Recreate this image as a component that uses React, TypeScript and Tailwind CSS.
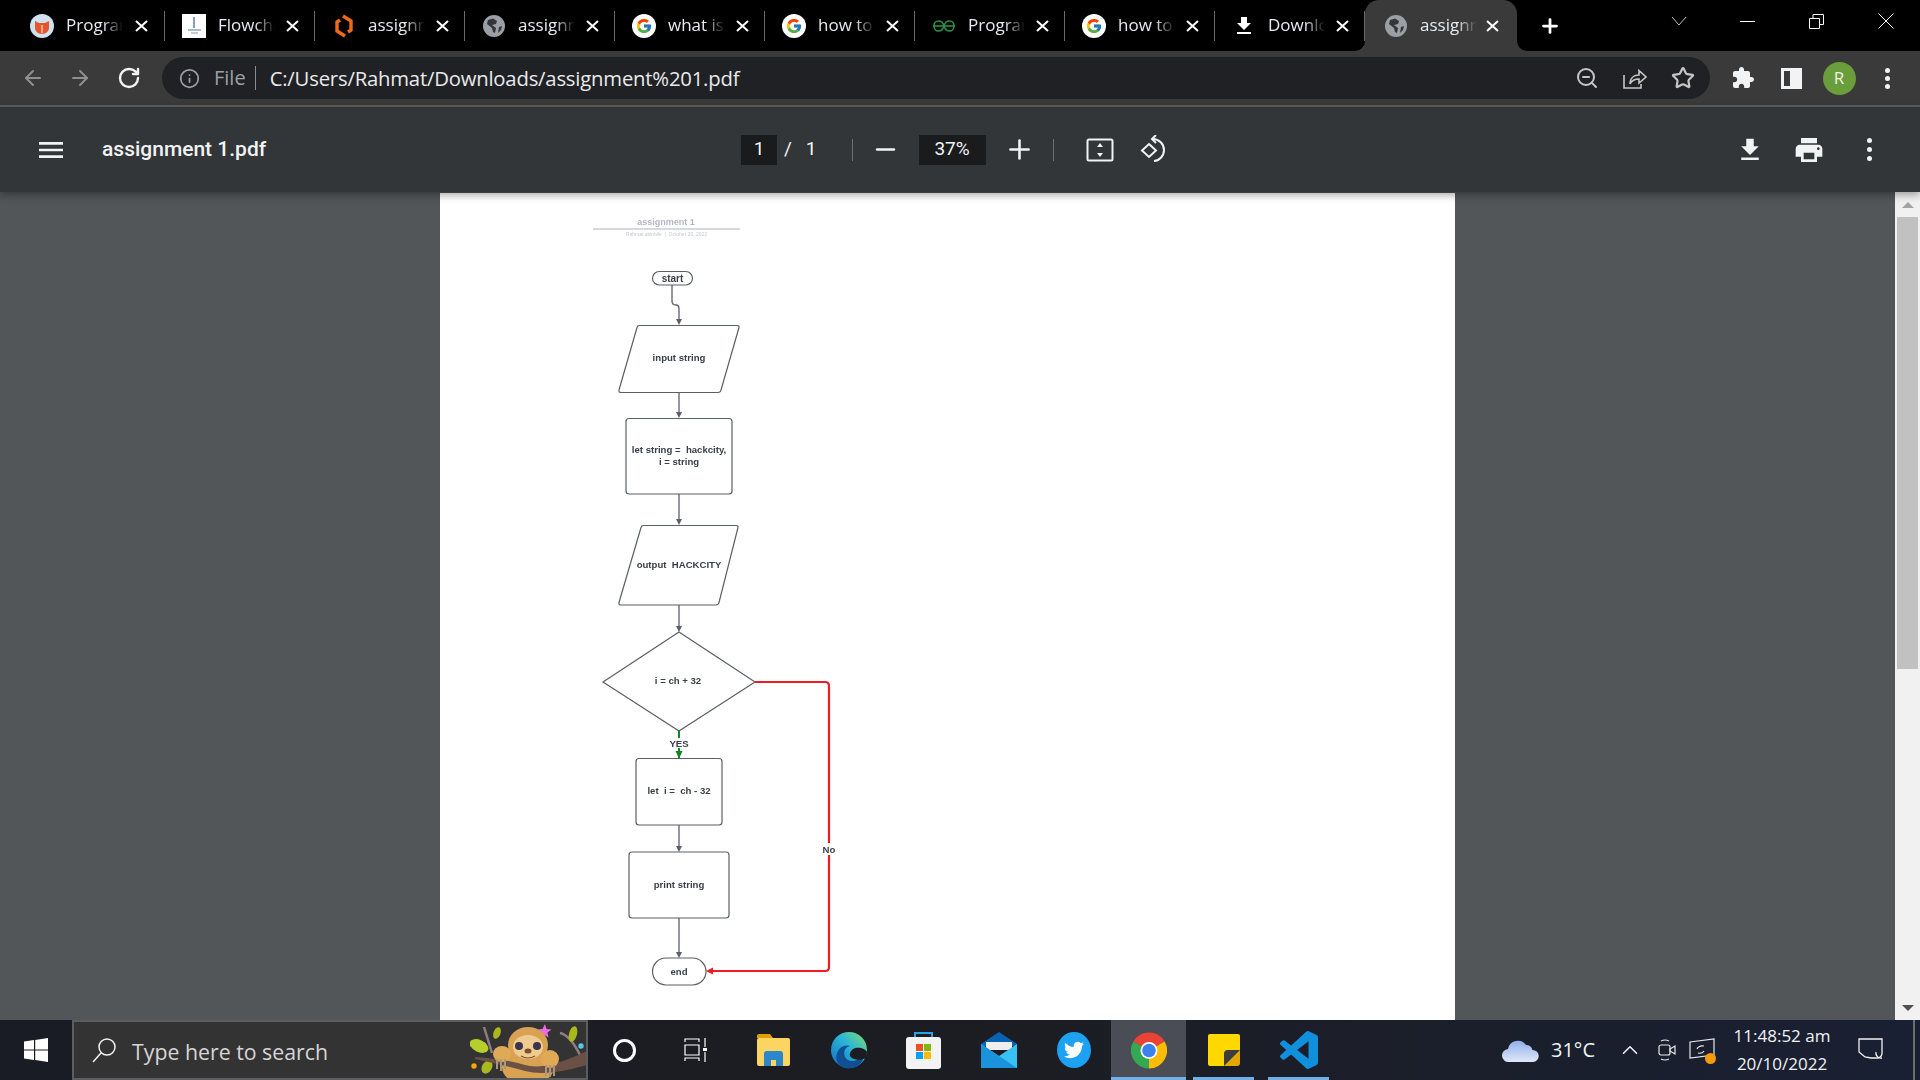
import { ArrowLeft, ArrowRight, RotateCw, Info, ZoomOut, Star, Plus, Minus, ChevronDown } from "lucide-react";
import type { ReactNode } from "react";

const ui = "font-['Open_Sans',sans-serif]";

function GoogleIcon() {
  return (
    <svg width="24" height="24" viewBox="0 0 48 48">
      <circle cx="24" cy="24" r="24" fill="#fff" />
      <g transform="translate(7 7) scale(0.71)">
        <path fill="#FFC107" d="M43.6 20.1H42V20H24v8h11.3C33.7 32.7 29.2 36 24 36c-6.6 0-12-5.4-12-12s5.4-12 12-12c3.1 0 5.8 1.2 8 3l5.7-5.7C34 6.1 29.3 4 24 4 13 4 4 13 4 24s9 20 20 20 20-9 20-20c0-1.3-.1-2.7-.4-3.9z" />
        <path fill="#FF3D00" d="M6.3 14.7l6.6 4.8C14.7 15.1 19 12 24 12c3.1 0 5.8 1.2 8 3l5.7-5.7C34 6.1 29.3 4 24 4 16.3 4 9.7 8.3 6.3 14.7z" />
        <path fill="#4CAF50" d="M24 44c5.2 0 9.9-2 13.4-5.2l-6.2-5.2C29.2 35.1 26.7 36 24 36c-5.2 0-9.6-3.3-11.3-7.9l-6.5 5C9.5 39.6 16.2 44 24 44z" />
        <path fill="#1976D2" d="M43.6 20.1H42V20H24v8h11.3c-.8 2.2-2.2 4.2-4.1 5.6l6.2 5.2C37 39.2 44 34 44 24c0-1.3-.1-2.7-.4-3.9z" />
      </g>
    </svg>
  );
}

function GlobeIcon() {
  return (
    <svg width="24" height="24" viewBox="0 0 24 24">
      <circle cx="12" cy="12" r="11" fill="#9aa0a6" />
      <path fill="#35363a" d="M11 4.5 6 6l-1 4 5 4 1 4 2 1 1-5-4-3 4-1 1-3zM17 13l3-1-1 4-3 3z" />
    </svg>
  );
}

function ProgramizIcon() {
  return (
    <svg width="24" height="24" viewBox="0 0 24 24">
      <circle cx="12" cy="12" r="12" fill="#cfe2ee" />
      <path fill="#e4572e" d="M5 7l4 2h6l4-2v7c0 3-3 6-7 6s-7-3-7-6z" />
      <path fill="#f7a58c" d="M11 11h2v8h-2z" />
    </svg>
  );
}

function FlowchartFavicon() {
  return (
    <div className="w-[24px] h-[24px] bg-white flex flex-col items-center justify-center gap-[1px]">
      <div className="w-[2px] h-[11px] bg-[#8aa0b8]" />
      <div className="w-[13px] h-[2px] bg-[#a9bccf]" />
      <div className="w-[7px] h-[2px] bg-[#c0ccd8]" />
    </div>
  );
}

function LucidIcon() {
  return (
    <svg width="24" height="24" viewBox="0 0 24 24" fill="none" stroke="#f26a16" strokeWidth="3.4">
      <path d="M11 2l8 5v9l-3 2" />
      <path d="M13 22l-8-5V8l3-2" />
    </svg>
  );
}

function GfgIcon() {
  return (
    <svg width="24" height="24" viewBox="0 0 24 24" fill="none" stroke="#2f8d46" strokeWidth="1.6">
      <path d="M1 12h22" />
      <path d="M12 12c-1-4-3-5-5.500-5S2 9 2 12s2 5 4.500 5 4.500-1.500 5.500-5" />
      <path d="M12 12c1-4 3-5 5.500-5S22 9 22 12s-2 5-4.500 5-4.500-1.500-5.500-5" />
    </svg>
  );
}

function DownloadGlyph({ size = 24, className = "" }: { size?: number; className?: string }) {
  return (
    <svg width={size} height={size} viewBox="0 0 24 24" fill="currentColor" className={className}>
      <path d="M19 9h-4V3H9v6H5l7 7 7-7zM5 18v2h14v-2H5z" />
    </svg>
  );
}

function Dots({ gap = "gap-[3px]" }: { gap?: string }) {
  return (
    <div className={`flex flex-col items-center ${gap}`}>
      <div className="w-[5px] h-[5px] rounded-full bg-[#f1f3f4]" />
      <div className="w-[5px] h-[5px] rounded-full bg-[#f1f3f4]" />
      <div className="w-[5px] h-[5px] rounded-full bg-[#f1f3f4]" />
    </div>
  );
}

function CloseGlyph() {
  return (
    <svg width="13" height="12" viewBox="0 0 13 12" stroke="#fff" strokeWidth="2" className="shrink-0">
      <path d="M1 1l11 10M12 1L1 11" />
    </svg>
  );
}

const tabs: { icon: ReactNode; title: string }[] = [
  { icon: <ProgramizIcon />, title: "Program" },
  { icon: <FlowchartFavicon />, title: "Flowchart" },
  { icon: <LucidIcon />, title: "assignment" },
  { icon: <GlobeIcon />, title: "assignment" },
  { icon: <GoogleIcon />, title: "what is a" },
  { icon: <GoogleIcon />, title: "how to co" },
  { icon: <GfgIcon />, title: "Program" },
  { icon: <GoogleIcon />, title: "how to co" },
  { icon: <DownloadGlyph className="text-white" />, title: "Downloads" },
];

function Tab({ icon, title, active, first }: { icon: ReactNode; title: string; active?: boolean; first?: boolean }) {
  return (
    <div
      className={`relative flex items-center h-[51px] shrink-0 ${
        active ? "w-[152px] pl-[19px] bg-[#3a3a3a] rounded-t-[14px]" : first ? "w-[150px] pl-[15px]" : "w-[150px] pl-[17px]"
      }`}
    >
      {icon}
      <span className="ml-[12px] -mt-[2px] w-[57px] whitespace-nowrap overflow-hidden text-[17px] text-[#e8eaed] [mask-image:linear-gradient(to_right,black_65%,transparent)]">
        {title}
      </span>
      <span className={active ? "ml-[9px]" : first ? "ml-[12px]" : "ml-[11px]"}>
        <CloseGlyph />
      </span>
      {!active && <div className="absolute right-0 top-[11px] w-[1px] h-[30px] bg-[#6a6a6a]" />}
      {active && (
        <>
          <div className="absolute -left-[10px] bottom-0 w-[10px] h-[10px] bg-[#3a3a3a]">
            <div className="w-full h-full bg-black rounded-br-[10px]" />
          </div>
          <div className="absolute -right-[10px] bottom-0 w-[10px] h-[10px] bg-[#3a3a3a]">
            <div className="w-full h-full bg-black rounded-bl-[10px]" />
          </div>
        </>
      )}
    </div>
  );
}

function WindowControls() {
  return (
    <div className="ml-auto flex items-start text-white">
      <div className="w-[68px] h-[42px] flex items-center justify-center">
        <svg width="16" height="10" viewBox="0 0 16 10" fill="none" stroke="#bdbdbd">
          <path d="M1 1l7 8 7-8" />
        </svg>
      </div>
      <div className="w-[69px] h-[42px] flex items-center justify-center">
        <div className="w-[15px] h-[1px] bg-white" />
      </div>
      <div className="w-[69px] h-[42px] flex items-center justify-center">
        <svg width="15" height="15" viewBox="0 0 15 15" fill="none" stroke="#fff">
          <path d="M.5 4.500h10v10H.5zM4 4.500V.5h10.500v10h-4" />
        </svg>
      </div>
      <div className="w-[69px] h-[42px] flex items-center justify-center">
        <svg width="16" height="16" viewBox="0 0 16 16" stroke="#fff">
          <path d="M.5.5l15 15M15.500.5l-15 15" />
        </svg>
      </div>
    </div>
  );
}

function TabStrip() {
  return (
    <div className="h-[51px] bg-black flex pl-[15px] shrink-0">
      {tabs.map((t, i) => (
        <Tab key={i} icon={t.icon} title={t.title} first={i === 0} />
      ))}
      <Tab icon={<GlobeIcon />} title="assignment" active />
      <div className="ml-[22px] h-[51px] flex items-center">
        <Plus size={22} strokeWidth={3} className="text-white" />
      </div>
      <WindowControls />
    </div>
  );
}

function ShareIcon() {
  return (
    <svg width="24" height="22" viewBox="0 0 24 22" fill="none" stroke="#c4c7c5" strokeWidth="1.6">
      <path d="M1 8v13h17v-4" />
      <path d="M7 17c0-6 4-9 9-9V3.500L23 10l-7 6v-4c-4 0-7 1-9 5z" />
    </svg>
  );
}

function AddressBar() {
  return (
    <div className={`h-[54px] bg-[#3a3a3a] flex items-center shrink-0 ${ui}`}>
      <div className="w-[66px] flex justify-center">
        <ArrowLeft size={24} className="text-[#8f8f8f] -ml-[1px]" />
      </div>
      <div className="w-[28px] flex justify-center">
        <ArrowRight size={24} className="text-[#8f8f8f]" />
      </div>
      <div className="w-[70px] flex justify-center">
        <RotateCw size={24} strokeWidth={2.4} className="text-[#f1f3f4]" />
      </div>
      <div className="-ml-[2px] w-[1548px] h-[42px] rounded-full bg-[#202124] flex items-center pl-[17px]">
        <Info size={21} className="text-[#9aa0a6]" />
        <span className="ml-[14px] text-[20px] text-[#9aa0a6]">File</span>
        <div className="ml-[9px] w-[1px] h-[24px] bg-[#8a8d91]" />
        <span className="ml-[14px] text-[20.3px] text-[#e8eaed] tracking-[-0.2px]">C:/Users/Rahmat/Downloads/assignment%201.pdf</span>
        <div className="ml-auto flex items-center">
          <div className="w-[48px] flex justify-center"><ZoomOut size={24} className="text-[#c4c7c5]" /></div>
          <div className="w-[48px] flex justify-center"><ShareIcon /></div>
          <div className="w-[48px] flex justify-center"><Star size={24} strokeWidth={2.2} className="text-[#c4c7c5]" /></div>
          <div className="w-[3px]" />
        </div>
      </div>
      <div className="ml-[9px] w-[48px] flex justify-center">
        <svg width="24" height="24" viewBox="0 0 24 24" fill="#f1f3f4">
          <path d="M20.500 11H19V7c0-1.100-.900-2-2-2h-4V3.500C13 2.120 11.880 1 10.500 1S8 2.120 8 3.500V5H4c-1.100 0-1.990.900-1.990 2v3.800H3.500c1.490 0 2.700 1.210 2.700 2.700s-1.210 2.700-2.700 2.700H2V20c0 1.100.900 2 2 2h3.800v-1.500c0-1.490 1.210-2.700 2.700-2.700 1.490 0 2.700 1.210 2.700 2.700V22H17c1.100 0 2-.900 2-2v-4h1.500c1.380 0 2.500-1.120 2.500-2.500S21.880 11 20.500 11z" />
        </svg>
      </div>
      <div className="w-[48px] flex justify-center">
        <div className="w-[21px] h-[21px] border-[3px] border-[#f1f3f4] bg-[#3a3a3a] flex justify-end">
          <div className="w-[9px] h-full bg-[#f1f3f4]" />
        </div>
      </div>
      <div className="w-[48px] flex justify-center">
        <div className="w-[33px] h-[33px] rounded-full bg-[#6a9e3a] text-[#eef3e6] text-[17px] flex items-center justify-center">R</div>
      </div>
      <div className="w-[48px] flex justify-center"><Dots /></div>
    </div>
  );
}

function PdfToolbar() {
  return (
    <div className="relative z-10 h-[85px] bg-[#323639] flex items-center shrink-0 text-[#f1f3f4] font-['Roboto',sans-serif] shadow-[0_3px_8px_rgba(0,0,0,0.35)]">
      <svg width="32" height="32" viewBox="0 0 24 24" fill="currentColor" className="ml-[35px]">
        <path d="M3 18h18v-2H3v2zm0-5h18v-2H3v2zm0-7v2h18V6H3z" />
      </svg>
      <span className="ml-[35px] text-[21px] font-medium w-[160px] whitespace-nowrap">assignment 1.pdf</span>
      <div className="ml-[479px] w-[36px] h-[30px] bg-[#191b1c] flex items-center justify-center text-[19px]">1</div>
      <span className="ml-[7px] text-[19px]">/</span>
      <span className="ml-[14px] text-[19px]">1</span>
      <div className="ml-[35px] w-[1px] h-[22px] bg-[#6d7073]" />
      <div className="ml-[23px] w-[20px] flex justify-center"><Minus size={29} strokeWidth={2} className="shrink-0" /></div>
      <div className="ml-[23px] w-[67px] h-[30px] bg-[#191b1c] flex items-center justify-center text-[19px]">37%</div>
      <div className="ml-[23px] w-[22px] flex justify-center"><Plus size={31} strokeWidth={2} className="shrink-0" /></div>
      <div className="ml-[22px] w-[1px] h-[22px] bg-[#6d7073]" />
      <svg width="28" height="24" viewBox="0 0 28 24" fill="none" className="ml-[32px]">
        <rect x="1.500" y="1.500" width="25" height="21" rx="1.500" stroke="#f1f3f4" strokeWidth="2" />
        <path d="M14 5l3 4h-6zM14 19l-3-4h6z" fill="#f1f3f4" />
      </svg>
      <svg width="28" height="30" viewBox="0 0 28 30" fill="none" stroke="#f1f3f4" strokeWidth="2" className="ml-[26px]">
        <path d="M9 9l7 6.500L9 22l-7-6.500z" />
        <path d="M13 4c6 0 11 5 11 11 0 6-5 11-10 11" />
        <path d="M16 0l-4 4 4 4" />
      </svg>
      <DownloadGlyph size={30} className="ml-auto mr-[28px]" />
      <svg width="32" height="32" viewBox="0 0 24 24" fill="currentColor" className="mr-[42px]">
        <path d="M19 8H5c-1.660 0-3 1.340-3 3v6h4v4h12v-4h4v-6c0-1.660-1.340-3-3-3zm-3 11H8v-5h8v5zm3-7c-.550 0-1-.450-1-1s.450-1 1-1 1 .450 1 1-.450 1-1 1zm-1-9H6v4h12V3z" />
      </svg>
      <div className="mr-[48px]"><Dots gap="gap-[4px]" /></div>
    </div>
  );
}

const ink = "#3a4049";
const line = "#5a5f68";

function Label({ x, y, children }: { x: number; y: number; children: ReactNode }) {
  return (
    <text x={x} y={y} textAnchor="middle" dominantBaseline="central" fontSize="9.6" fontWeight="700" fill={ink} xmlSpace="preserve">
      {children}
    </text>
  );
}

function Arrow({ x, y, color = line }: { x: number; y: number; color?: string }) {
  return <path d={`M${x - 3} ${y - 6}h6l-3 6z`} fill={color} />;
}

function Flowchart() {
  return (
    <svg width="1015" height="827" viewBox="440 193 1015 827" fill="none" className="font-['Liberation_Sans',sans-serif] blur-[0.25px]">
      <text x="666" y="222" textAnchor="middle" dominantBaseline="central" fontSize="9" fontWeight="700" fill="#b4b7c2">assignment 1</text>
      <path d="M593 229h147" stroke="#cbcdd6" strokeWidth="1.500" />
      <text x="666.500" y="234" textAnchor="middle" dominantBaseline="central" fontSize="5" fill="#c6c8d0" xmlSpace="preserve">Rahmat akinbile  |  October 20, 2022</text>

      <g stroke={line} strokeWidth="1.200">
        <rect x="652.500" y="271.500" width="40" height="13.500" rx="6.700" />
        <path d="M672 285v16q0 4 4 4 3 0 3 4v12" strokeWidth="1.300" />
        <path d="M639 325.500H737q2.500 0 2 2L721 390q-.5 2.500-3 2.500H621q-2.500 0-2-2.500L637 327.500q.5-2 2-2z" />
        <path d="M679 392v21" strokeWidth="1.300" />
        <rect x="626" y="418.500" width="106" height="75.500" rx="3" />
        <path d="M679 494v26" strokeWidth="1.300" />
        <path d="M643 525.500H736q2.500 0 2 2L719 602.500q-.5 2.500-3 2.500H621q-2.500 0-2-2.500L641 527.500q.5-2 2-2z" />
        <path d="M679 605v22" strokeWidth="1.300" />
        <path d="M679 632l76 50-76 49-76-49z" />
        <rect x="636" y="758.500" width="86" height="66.500" rx="3" />
        <path d="M679 825v22" strokeWidth="1.300" />
        <rect x="629" y="852" width="100" height="66" rx="3" />
        <path d="M679 918v35" strokeWidth="1.300" />
        <rect x="652.500" y="958" width="53.500" height="27" rx="13.500" />
      </g>
      <Arrow x={679} y={325} />
      <Arrow x={679} y={418} />
      <Arrow x={679} y={525} />
      <Arrow x={679} y={632} />
      <Arrow x={679} y={852} />
      <Arrow x={679} y={958} />

      <path d="M679 731v27" stroke="#0a8a1e" strokeWidth="2" />
      <path d="M675.500 751h7l-3.500 7.500z" fill="#0a8a1e" />
      <rect x="667" y="738" width="24" height="10" fill="#fff" />
      <Label x={679} y={743}>YES</Label>

      <path d="M755 682h70q4 0 4 4v281q0 4-4 4H712" stroke="#f01c24" strokeWidth="2.200" />
      <path d="M706 971l7-3.500v7z" fill="#f01c24" />
      <rect x="821" y="843" width="16" height="12" fill="#fff" />
      <Label x={829} y={849}>No</Label>

      <text x="672.500" y="278" textAnchor="middle" dominantBaseline="central" fontSize="10" fontWeight="700" fill={ink}>start</text>
      <Label x={679} y={357}>input string</Label>
      <Label x={679} y={449}>let string =  hackcity,</Label>
      <Label x={679} y={461}>i = string</Label>
      <Label x={679} y={564}>output  HACKCITY</Label>
      <Label x={678} y={680}>i = ch + 32</Label>
      <Label x={679} y={790}>let  i =  ch - 32</Label>
      <Label x={679} y={884}>print string</Label>
      <Label x={679} y={971}>end</Label>
    </svg>
  );
}

function Scrollbar() {
  return (
    <div className="ml-auto w-[25px] h-full bg-[#f1f1f1] flex flex-col items-center">
      <div className="h-[25px] flex items-center justify-center shrink-0">
        <div className="w-0 h-0 border-x-[6px] border-x-transparent border-b-[6px] border-b-[#a3a3a3]" />
      </div>
      <div className="w-[21px] h-[452px] bg-[#c1c1c1] shrink-0" />
      <div className="mt-auto h-[25px] flex items-center justify-center shrink-0">
        <div className="w-0 h-0 border-x-[6px] border-x-transparent border-t-[6px] border-t-[#505050]" />
      </div>
    </div>
  );
}

function Viewer() {
  return (
    <div className="flex-1 min-h-0 bg-[#525659] flex pl-[440px] overflow-hidden">
      <div className="w-[1015px] h-full bg-white mt-[1px]">
        <Flowchart />
      </div>
      <Scrollbar />
    </div>
  );
}

function SlothArt() {
  return (
    <svg width="117" height="58" viewBox="0 0 117 58" className="shrink-0">
      <path d="M14 6l8 26M90 12q10 2 20 22" stroke="#8d7d80" strokeWidth="2.500" fill="none" />
      <ellipse cx="9" cy="25" rx="10" ry="6" fill="#b7cf2a" transform="rotate(25 9 25)" />
      <ellipse cx="27" cy="12" rx="3.500" ry="6" fill="#a9b81c" transform="rotate(20 27 12)" />
      <ellipse cx="17" cy="46" rx="5" ry="7" fill="#a9b81c" transform="rotate(30 17 46)" />
      <ellipse cx="103" cy="13" rx="4" ry="8" fill="#a9b81c" transform="rotate(15 103 13)" />
      <circle cx="4" cy="45" r="2.700" fill="#f5a800" />
      <circle cx="111" cy="25" r="2.700" fill="#58c8e8" />
      <path d="M75 3l1.500 5 5 .5-4 3 1 5-4-2.500-4 2.500 1-5-4-3 5-.5z" fill="#e96ee0" />
      <ellipse cx="58" cy="46" rx="26" ry="18" fill="#d9a252" />
      <ellipse cx="58" cy="24" rx="20" ry="18" fill="#d9a252" />
      <ellipse cx="58" cy="26" rx="15" ry="12" fill="#eecb8f" />
      <circle cx="49" cy="25" r="4" fill="#3c3350" />
      <circle cx="67" cy="25" r="4" fill="#3c3350" />
      <ellipse cx="58" cy="30" rx="3.500" ry="2.500" fill="#7a4f2a" />
      <path d="M51 35q7 4 14 0" stroke="#7a4f2a" strokeWidth="1.200" fill="none" />
      <path d="M5 36q30 2 50 8t62-14v14q-40 12-62 6T5 38z" fill="#6b5046" />
      <ellipse cx="32" cy="33" rx="9" ry="8" fill="#e0a955" />
      <ellipse cx="80" cy="38" rx="9" ry="9" fill="#e0a955" />
      <path d="M27 38v10M31 38v12M35 38v10M76 44v11M80 44v12M84 44v11" stroke="#a8977a" strokeWidth="2" />
    </svg>
  );
}

function SearchBox() {
  return (
    <div className="w-[516px] h-[60px] border-[2px] border-[#5b5d60] bg-[#333333] flex items-center overflow-hidden">
      <svg width="26" height="26" viewBox="0 0 26 26" fill="none" stroke="#f2f2f2" strokeWidth="1.500" className="ml-[17px]">
        <circle cx="16" cy="10" r="8" />
        <path d="M10 16L2 25" />
      </svg>
      <span className="ml-[15px] mt-[3px] text-[21.3px] text-[#d6d6d6] whitespace-nowrap font-['Open_Sans',sans-serif]">Type here to search</span>
      <div className="ml-auto -mr-[1px] flex"><SlothArt /></div>
    </div>
  );
}

function AppSlot({ children, state }: { children: ReactNode; state?: "active" | "open" }) {
  return (
    <div className={`relative w-[75px] h-[60px] flex items-center justify-center ${state === "active" ? "bg-[#4a4d55]" : ""}`}>
      {children}
      {state === "active" && <div className="absolute left-0 right-0 bottom-0 h-[3px] bg-[#6fb0ea]" />}
      {state === "open" && <div className="absolute left-[7px] right-[7px] bottom-0 h-[3px] bg-[#6fb0ea]" />}
    </div>
  );
}

function ChromeLogo() {
  return (
    <svg width="36" height="37" viewBox="0 0 36 36">
      <path d="M18 18L2.400 9A18 18 0 0 1 33.600 9z" fill="#ea4335" />
      <path d="M18 18L33.600 9A18 18 0 0 1 18 36z" fill="#fbbc04" />
      <path d="M18 18L18 36A18 18 0 0 1 2.400 9z" fill="#34a853" />
      <circle cx="18" cy="18" r="8.500" fill="#fff" />
      <circle cx="18" cy="18" r="6.800" fill="#3b82f0" />
    </svg>
  );
}

function EdgeLogo() {
  return (
    <svg width="36" height="38" viewBox="0 0 36 36">
      <defs>
        <linearGradient id="edge" x1="0" y1="1" x2="1" y2="0">
          <stop offset="0" stopColor="#0c6ebd" />
          <stop offset="0.55" stopColor="#2bb3d8" />
          <stop offset="1" stopColor="#7fe06a" />
        </linearGradient>
      </defs>
      <circle cx="18" cy="18" r="18" fill="url(#edge)" />
      <path d="M14 36c-8-2-10-9-8-15 2-6 8-9 13-7-5 1-7 6-5 11 2 4 7 5 12 3 2-1 5-2 6 0-2 5-10 10-18 8z" fill="#0f4f94" />
      <path d="M22 17c5-3 13 0 14 3l-1 6c-5 3-14 2-16-2-1-3 1-5 3-7z" fill="#1b1c20" />
    </svg>
  );
}

function StoreLogo() {
  return (
    <svg width="35" height="37" viewBox="0 0 35 37">
      <path d="M9 6V1h17v5" fill="none" stroke="#2aa0e8" strokeWidth="2" />
      <rect y="5" width="35" height="32" rx="3" fill="#f3f3f3" />
      <rect x="10" y="12" width="7" height="7" fill="#f25022" />
      <rect x="18" y="12" width="7" height="7" fill="#7fba00" />
      <rect x="10" y="20" width="7" height="7" fill="#00a4ef" />
      <rect x="18" y="20" width="7" height="7" fill="#ffb900" />
    </svg>
  );
}

function MailLogo() {
  return (
    <svg width="36" height="36" viewBox="0 0 36 36">
      <path d="M0 12L18 0l18 12v2H0z" fill="#0a62b4" />
      <path d="M5 10h26v8H5z" fill="#eee" />
      <path d="M0 12l18 12 18-12v24H0z" fill="#38c0f2" />
      <path d="M0 36V12l18 12 18 12z" fill="#1b93dc" />
    </svg>
  );
}

function TaskBar() {
  return (
    <div className="h-[60px] shrink-0 flex items-stretch bg-gradient-to-r from-[#191c25] via-[#1c1d22] to-[#192033] text-[#f2f2f2] font-['Open_Sans',sans-serif]">
      <div className="w-[72px] flex items-center justify-center">
        <svg width="24" height="24" viewBox="0 0 24 24" fill="#fff">
          <path d="M0 3.500l10-1.400v9.300H0zM11.200 1.900L24 0v11.400H11.200zM0 12.600h10v9.300L0 20.500zM11.200 12.600H24V24l-12.800-1.900z" />
        </svg>
      </div>
      <SearchBox />
      <div className="w-[72px] flex items-center justify-center">
        <div className="w-[23px] h-[23px] rounded-full border-[3.5px] border-white" />
      </div>
      <div className="w-[72px] flex items-center justify-center">
        <svg width="24" height="24" viewBox="0 0 24 24" fill="none" stroke="#fff" strokeWidth="1.200">
          <path d="M1 4V1h14v3M1 7h14v10H1zM1 23v-3h14v3M21 0v9M21 14v10" />
          <rect x="19" y="10" width="4" height="3" fill="#fff" stroke="none" />
        </svg>
      </div>
      <div className="w-[4px]" />
      <AppSlot>
        <svg width="33" height="32" viewBox="0 0 33 32">
          <path d="M0 2q0-2 2-2h11l3 4H0z" fill="#e0a100" />
          <rect y="4" width="33" height="28" rx="2" fill="#fcd462" />
          <path d="M7 32V20q0-3 3-3h13q3 0 3 3v12h-7v-6h-5v6z" fill="#2c86c9" />
        </svg>
      </AppSlot>
      <AppSlot><EdgeLogo /></AppSlot>
      <AppSlot><StoreLogo /></AppSlot>
      <AppSlot><MailLogo /></AppSlot>
      <AppSlot>
        <svg width="34" height="36" viewBox="0 0 34 36">
          <ellipse cx="17" cy="18" rx="17" ry="18" fill="#1da1f2" />
          <svg x="7" y="8" width="20" height="20" viewBox="0 0 24 24">
            <path fill="#fff" d="M23.953 4.570a10 10 0 01-2.825.775 4.958 4.958 0 002.163-2.723c-.951.555-2.005.959-3.127 1.184a4.920 4.920 0 00-8.384 4.482C7.690 8.095 4.067 6.130 1.640 3.162a4.822 4.822 0 00-.666 2.475c0 1.710.870 3.213 2.188 4.096a4.904 4.904 0 01-2.228-.616v.060a4.923 4.923 0 003.946 4.827 4.996 4.996 0 01-2.212.085 4.936 4.936 0 004.604 3.417 9.867 9.867 0 01-6.102 2.105c-.390 0-.779-.023-1.170-.067a13.995 13.995 0 007.557 2.209c9.053 0 13.998-7.496 13.998-13.985 0-.210 0-.420-.015-.630A9.935 9.935 0 0024 4.590z" />
          </svg>
        </svg>
      </AppSlot>
      <AppSlot state="active"><ChromeLogo /></AppSlot>
      <AppSlot state="open">
        <svg width="32" height="32" viewBox="0 0 32 32">
          <path d="M0 2q0-2 2-2h28q2 0 2 2v18L18 32H2q-2 0-2-2z" fill="#ffd800" />
          <path d="M16 32V20q0-4 4-4h12v13q0 3-3 3z" fill="#e0a800" />
          <path d="M16 32V20q0-4 4-4h12z" fill="#3d3d3d" />
        </svg>
      </AppSlot>
      <AppSlot state="open">
        <svg width="38" height="38" viewBox="0 0 24 24">
          <path fill="#0f8fdc" d="M23.150 2.587L18.210.21a1.494 1.494 0 0 0-1.705.29l-9.460 8.630-4.120-3.128a.999.999 0 0 0-1.276.057L.327 7.261A1 1 0 0 0 .326 8.740L3.899 12 .326 15.260a1 1 0 0 0 .001 1.479L1.650 17.940a.999.999 0 0 0 1.276.057l4.120-3.128 9.460 8.630a1.492 1.492 0 0 0 1.704.29l4.942-2.377A1.500 1.500 0 0 0 24 20.060V3.939a1.500 1.500 0 0 0-.850-1.352zm-5.146 14.861L10.826 12l7.178-5.448v10.896z" />
        </svg>
      </AppSlot>

      <div className="ml-auto flex items-center">
        <svg width="38" height="25" viewBox="0 0 38 25" className="mr-[11px]">
          <defs>
            <linearGradient id="cloud" x1="0" y1="0" x2="0" y2="1">
              <stop offset="0" stopColor="#8fb0ea" />
              <stop offset="1" stopColor="#dfe8f8" />
            </linearGradient>
          </defs>
          <path d="M7 24a6.500 6.500 0 0 1-1-13A10 10 0 0 1 24 7a7 7 0 0 1 6.500 5A6 6 0 0 1 31 24z" fill="url(#cloud)" />
        </svg>
        <span className="text-[20px] w-[42px] whitespace-nowrap">31°C</span>
        <div className="w-[74px] flex justify-center">
          <ChevronDown size={26} strokeWidth={1.4} className="rotate-180" />
        </div>
        <svg width="18" height="24" viewBox="0 0 18 24" fill="none" stroke="#e8e8e8" strokeWidth="1.200" className="-ml-[9px]">
          <rect x="1" y="7" width="11" height="10" rx="2" />
          <path d="M12 11l5-3v8l-5-3zM3 3q4-2 8 0M3 21q4 2 8 0" />
        </svg>
        <div className="relative ml-[13px] w-[26px] h-[24px]">
          <svg width="26" height="24" viewBox="0 0 26 24" fill="none" stroke="#e8e8e8" strokeWidth="1.200">
            <path d="M1 4l24-3v16L1 20z" />
            <path d="M8 11q2-4 7-3M15 13q-2 3-6 2" />
          </svg>
          <div className="absolute -right-[1px] -bottom-[2px] w-[11px] h-[11px] rounded-full bg-[#f59a0c]" />
        </div>
        <div className="ml-[9px] w-[116px] flex flex-col items-center leading-[28px] text-[17px] whitespace-nowrap">
          <span>11:48:52 am</span>
          <span>20/10/2022</span>
        </div>
        <div className="ml-[10px] w-[40px] flex justify-center">
          <svg width="25" height="24" viewBox="0 0 25 24" fill="none" stroke="#f2f2f2" strokeWidth="1.300">
            <path d="M1 1h23v14q0 4-4 5h-7l-6-1-6-5z" />
            <path d="M18 14a5 5 0 0 0 6 6" />
          </svg>
        </div>
        <div className="ml-[23px] mr-[5px] w-[2px] h-full bg-[#6a6d72]" />
      </div>
    </div>
  );
}

export default function App() {
  return (
    <div className="w-[1920px] h-[1080px] overflow-hidden flex flex-col bg-[#525659]">
      <div className={ui}>
        <TabStrip />
      </div>
      <AddressBar />
      <div className="h-[2px] bg-[#5f5f5f] shrink-0" />
      <PdfToolbar />
      <Viewer />
      <TaskBar />
    </div>
  );
}
